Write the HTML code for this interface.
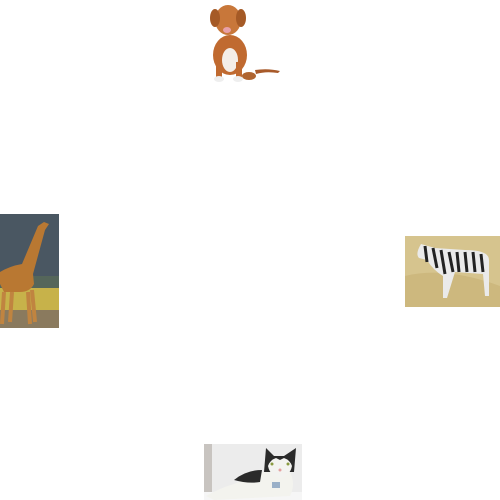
<!DOCTYPE html>
<html><head><style>
html,body{margin:0;padding:0;width:500px;height:500px;background:#fff;overflow:hidden;position:relative}
.a{position:absolute}
</style></head><body>
<svg class="a" style="left:200px;top:0" width="85" height="88" viewBox="0 0 85 88">
 <path d="M55 70 Q68 68 80 71 L78 73 Q66 71 56 74Z" fill="#a85a2a"/>
 <ellipse cx="30" cy="55" rx="17" ry="20" fill="#c06a30"/>
 <ellipse cx="30" cy="60" rx="8" ry="12" fill="#f4eee8"/>
 <ellipse cx="28" cy="20" rx="13" ry="15" fill="#c8773a"/>
 <ellipse cx="15" cy="18" rx="5" ry="9" fill="#a55a26"/>
 <ellipse cx="41" cy="18" rx="5" ry="9" fill="#a55a26"/>
 <ellipse cx="27" cy="30" rx="4" ry="3" fill="#e8a0a8"/>
 <rect x="16" y="62" width="6" height="16" fill="#c06a30"/>
 <rect x="36" y="62" width="6" height="16" fill="#c06a30"/>
 <ellipse cx="19" cy="79" rx="5" ry="3" fill="#eee"/>
 <ellipse cx="38" cy="79" rx="5" ry="3" fill="#eee"/>
 <ellipse cx="49" cy="76" rx="7" ry="4" fill="#b06530"/>
</svg>
<svg class="a" style="left:0;top:214px" width="59" height="114" viewBox="0 0 59 114">
 <rect width="59" height="114" fill="#4a5762"/>
 <rect y="62" width="59" height="12" fill="#55665a"/>
 <rect y="74" width="59" height="22" fill="#c7b24a"/>
 <rect y="96" width="59" height="18" fill="#8a7a5e"/>
 <path d="M38 12 L44 8 L49 10 L45 16 L33 60 L34 70 Q30 78 20 78 L4 78 L0 70 L0 58 Q10 52 22 50 Z" fill="#b97832"/>
 <path d="M4 78 L2 110 M12 78 L10 108 M28 78 L30 110 M32 76 L35 108" stroke="#c08440" stroke-width="4"/>
</svg>
<svg class="a" style="left:405px;top:236px" width="95" height="71" viewBox="0 0 95 71">
 <rect width="95" height="71" fill="#d6c48e"/>
 <path d="M0 40 Q40 30 95 50 L95 71 L0 71Z" fill="#cdb87e"/>
 <path d="M16 8 L30 12 L60 14 Q84 14 84 24 L84 60 L80 60 L78 38 L50 36 L42 62 L38 62 L38 40 Q28 34 22 24 L14 22 Q10 18 16 8Z" fill="#eaeaea"/>
 <path d="M20 10 L22 26 M28 12 L32 32 M36 14 L40 38 M44 16 L48 36 M52 16 L54 36 M60 16 L62 36 M68 16 L70 36 M76 18 L78 36" stroke="#222" stroke-width="3"/>
</svg>
<svg class="a" style="left:204px;top:444px" width="98" height="56" viewBox="0 0 98 56">
 <rect width="98" height="56" fill="#ececec"/>
 <rect width="8" height="56" fill="#c8c4c0"/>
 <rect y="48" width="98" height="8" fill="#f6f6f6"/>
 <path d="M2 52 Q16 44 30 40 Q44 34 58 28 L86 28 Q92 40 86 52 L10 56Z" fill="#f3f3ee"/>
 <path d="M30 36 Q42 26 58 26 L56 38 Q44 40 30 36Z" fill="#2a2a2a"/>
 <path d="M60 28 L62 4 L70 12 L80 12 L92 4 L90 28Z" fill="#2a2a2a"/>
 <path d="M64 22 Q66 16 72 14 L76 16 L80 14 Q86 16 88 22 Q86 32 76 34 Q66 32 64 22Z" fill="#f3f3f0"/>
 <circle cx="68" cy="20" r="1.5" fill="#8a9a40"/><circle cx="84" cy="20" r="1.5" fill="#8a9a40"/>
 <circle cx="76" cy="26" r="1.5" fill="#e4a0a0"/>
 <rect x="68" y="38" width="8" height="6" fill="#9ab0c8"/>
</svg>
</body></html>
